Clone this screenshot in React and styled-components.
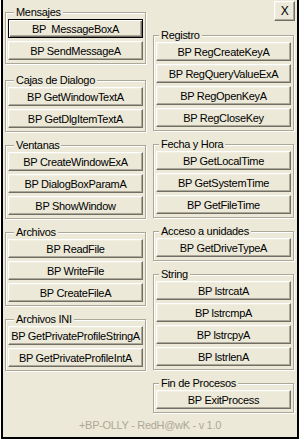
import React from "react";
import styled, { createGlobalStyle, css } from "styled-components";

const GlobalStyle = createGlobalStyle`
  html, body {
    margin: 0;
    padding: 0;
    background: #ffffff;
  }
  body {
    font-family: "Liberation Sans", Arial, sans-serif;
    font-size: 11px;
  }
`;

const Screen = styled.div`
  width: 304px;
  height: 444px;
  padding-left: 1px;
  box-sizing: border-box;
  background: #ffffff;
  overflow: hidden;
`;

const Window = styled.div`
  width: 298px;
  height: 439px;
  box-sizing: border-box;
  background: #ece9d8;
  border: 2px solid #000;
  border-top: none;
  display: flex;
  flex-direction: column;
  letter-spacing: -0.3px;
`;

const Columns = styled.div`
  display: grid;
  grid-template-columns: 141px 141px;
  column-gap: 7px;
  padding: 0 3px 0 2px;
`;

const Column = styled.div`
  display: flex;
  flex-direction: column;
`;

const CloseRow = styled.div`
  display: flex;
  justify-content: flex-end;
  margin: 1px -1px 0 0;
`;

const Group = styled.div`
  margin-top: ${(p) => p.$mt ?? 13}px;
  padding: 0 2px 3px;
  border: 1px solid #aca899;
  box-shadow: inset 1px 1px #fff, 1px 1px #fff;
  display: flex;
  flex-direction: column;
`;

const Caption = styled.span`
  align-self: flex-start;
  margin: -7px 0 1px ${(p) => p.$indent}px;
  padding: 0 2px;
  line-height: 12px;
  background: #ece9d8;
  color: #000;
  white-space: nowrap;
`;

const Stack = styled.div`
  display: flex;
  flex-direction: column;
  gap: 3px;
`;

const Button = styled.button`
  height: 19px;
  width: 100%;
  margin: 0;
  padding: 0;
  box-sizing: border-box;
  font: 11px "Liberation Sans", Arial, sans-serif;
  letter-spacing: -0.3px;
  color: #000;
  background: #ece9d8;
  border: 1px solid;
  border-color: #fff #716f64 #716f64 #fff;
  box-shadow: inset -1px -1px #aca899, inset 1px 1px #f1efe2;
  white-space: pre;
  overflow: visible;
  ${(p) =>
    p.$default &&
    css`
      border-color: #000;
      box-shadow: inset 1px 1px #fff, inset -1px -1px #716f64,
        inset -2px -2px #aca899;
    `}
`;

const CloseButton = styled(Button)`
  width: 21px;
  height: 20px;
  font-size: 12px;
`;

const Footer = styled.div`
  margin-top: auto;
  padding-bottom: 5px;
  line-height: 13px;
  text-align: center;
  color: #aca899;
`;

const left = [
  { title: "Mensajes", items: ["BP  MessageBoxA", "BP SendMessageA"], def: 0, mt: 12 },
  { title: "Cajas de Dialogo", items: ["BP GetWindowTextA", "BP GetDlgItemTextA"], mt: 16 },
  { title: "Ventanas", items: ["BP CreateWindowExA", "BP DialogBoxParamA", "BP ShowWindow"] },
  { title: "Archivos", items: ["BP ReadFile", "BP WriteFile", "BP CreateFileA"] },
  { title: "Archivos INI", items: ["BP GetPrivateProfileStringA", "BP GetPrivateProfileIntA"] },
];

const right = [
  { title: "Registro", items: ["BP RegCreateKeyA", "BP RegQueryValueExA", "BP RegOpenKeyA", "BP RegCloseKey"], mt: 14 },
  { title: "Fecha y Hora", items: ["BP GetLocalTime", "BP GetSystemTime", "BP GetFileTime"] },
  { title: "Acceso a unidades", items: ["BP GetDriveTypeA"] },
  { title: "String", items: ["BP lstrcatA", "BP lstrcmpA", "BP lstrcpyA", "BP lstrlenA"] },
  { title: "Fin de Procesos", items: ["BP ExitProcess"] },
];

const renderGroups = (indent) => (g) => (
  <Group key={g.title} $mt={g.mt}>
    <Caption $indent={indent}>{g.title}</Caption>
    <Stack>
      {g.items.map((label, j) => (
        <Button key={label} $default={g.def === j}>
          {label}
        </Button>
      ))}
    </Stack>
  </Group>
);

export default function App() {
  return (
    <Screen>
      <GlobalStyle />
      <Window>
        <Columns>
          <Column>{left.map(renderGroups(6))}</Column>
          <Column>
            <CloseRow>
              <CloseButton>X</CloseButton>
            </CloseRow>
            {right.map(renderGroups(3))}
          </Column>
        </Columns>
        <Footer>+BP-OLLY - RedH@wK - v 1.0</Footer>
      </Window>
    </Screen>
  );
}
